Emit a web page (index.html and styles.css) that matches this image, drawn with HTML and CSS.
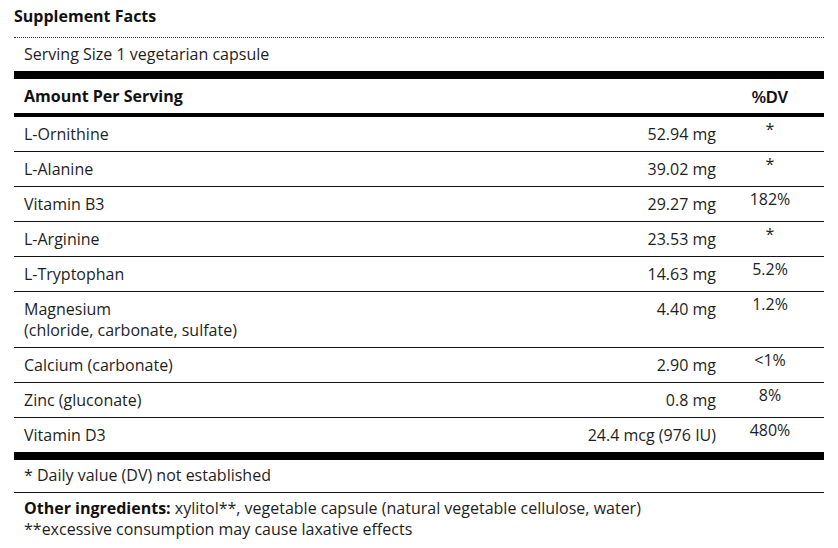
FILE: index.html
```html
<!DOCTYPE html>
<html>
<head>
<meta charset="utf-8">
<link rel="stylesheet" href="styles.css">
</head>
<body>
<div class="facts">
  <h1 class="title">Supplement Facts</h1>
  <div class="panel">
    <div class="serving">Serving Size 1 vegetarian capsule</div>
    <div class="row head">
      <span class="name">Amount Per Serving</span>
      <span class="amt"></span>
      <span class="dv">%DV</span>
    </div>
    <div class="row first"><span class="name">L-Ornithine</span><span class="amt">52.94 mg</span><span class="dv">*</span></div>
    <div class="row"><span class="name">L-Alanine</span><span class="amt">39.02 mg</span><span class="dv">*</span></div>
    <div class="row"><span class="name">Vitamin B3</span><span class="amt">29.27 mg</span><span class="dv">182%</span></div>
    <div class="row"><span class="name">L-Arginine</span><span class="amt">23.53 mg</span><span class="dv">*</span></div>
    <div class="row"><span class="name">L-Tryptophan</span><span class="amt">14.63 mg</span><span class="dv">5.2%</span></div>
    <div class="row"><span class="name">Magnesium<br>(chloride, carbonate, sulfate)</span><span class="amt">4.40 mg</span><span class="dv">1.2%</span></div>
    <div class="row"><span class="name">Calcium (carbonate)</span><span class="amt">2.90 mg</span><span class="dv">&lt;1%</span></div>
    <div class="row"><span class="name">Zinc (gluconate)</span><span class="amt">0.8 mg</span><span class="dv">8%</span></div>
    <div class="row last"><span class="name">Vitamin D3</span><span class="amt">24.4 mcg (976 IU)</span><span class="dv">480%</span></div>
    <div class="note">* Daily value (DV) not established</div>
    <div class="other"><strong>Other ingredients:</strong> xylitol**, vegetable capsule (natural vegetable cellulose, water)<br>**excessive consumption may cause laxative effects</div>
  </div>
</div>
</body>
</html>
```

FILE: styles.css
```css
html, body {
  margin: 0;
  padding: 0;
  background: #fff;
}
body {
  font-family: "Open Sans", "Liberation Sans", sans-serif;
  font-size: 16px;
  line-height: 21px;
  color: #1e1e1e;
}
.facts {
  width: 810px;
  padding-left: 14px;
}
.title {
  margin: 0;
  padding: 5px 0 10px;
  font-size: 16px;
  line-height: 22px;
  font-weight: 700;
  color: #111;
}
.panel {
  border-top: 1px dotted #333;
}
.serving {
  padding: 6px 10px;
  border-bottom: 8px solid #000;
}
.row {
  display: grid;
  grid-template-columns: 1fr auto 108px;
  border-bottom: 1px solid #111;
}
.row .name {
  padding: 7px 10px 6px;
}
.row .amt {
  padding: 7px 0 6px;
  text-align: right;
}
.row .dv {
  padding: 2px 0 0;
  text-align: center;
}
.row.head {
  border-bottom: 4px solid #000;
}
.row.head .name {
  font-weight: 700;
  color: #111;
}
.row.head .dv {
  padding-top: 8px;
  font-family: "Liberation Sans", Arial, sans-serif;
  font-weight: 700;
  font-size: 16px;
  color: #111;
}
.row.last {
  border-bottom: 8px solid #000;
}
.note {
  padding: 5px 10px 6px;
  border-bottom: 1px solid #111;
}
.other {
  padding: 5px 10px;
}
.other strong {
  font-weight: 700;
  color: #111;
}
```
